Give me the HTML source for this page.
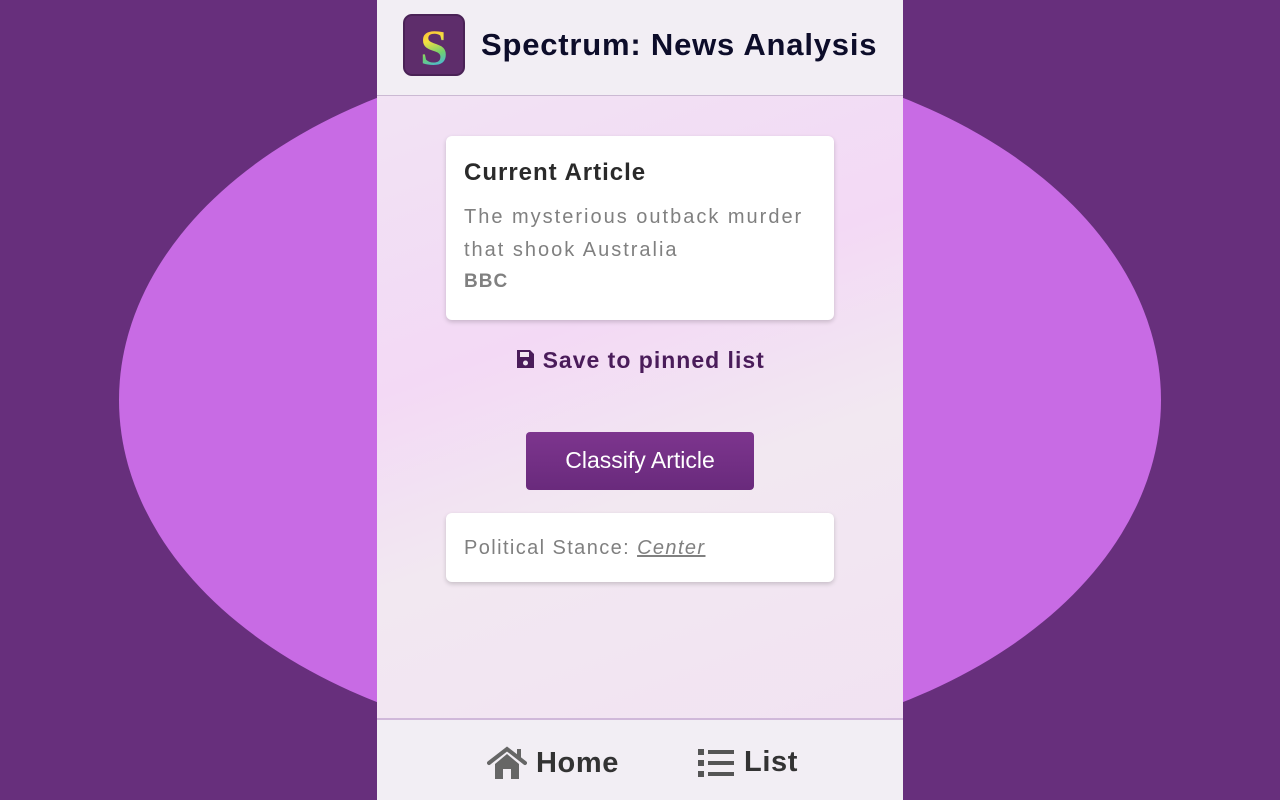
<!DOCTYPE html>
<html><head><meta charset="utf-8"><style>
*{margin:0;padding:0;box-sizing:border-box}
body{width:1280px;height:800px;background:#672f7c;position:relative;overflow:hidden;font-family:"Liberation Sans",sans-serif}
.ell{position:absolute;left:119px;top:50px;width:1042px;height:700px;border-radius:50%;background:#c86be4}
.panel{position:absolute;left:377px;top:0;width:526px;height:800px;background:linear-gradient(160deg,#f1e6f4 0%,#f3d9f5 40%,#f2e8f1 60%,#f1e1f3 100%)}
.hdr{height:96px;background:#f2eef4;border-bottom:1px solid #cbb9d3;position:relative}
.logo{position:absolute;left:26px;top:14px;width:62px;height:62px;border-radius:9px;background:#5e2d6b;border:2px solid #4a2256}
.logo span{position:absolute;left:0;right:0;top:2px;text-align:center;font:bold 50px "Liberation Serif",serif;background:linear-gradient(160deg,#ff6fa0,#ffb030,#f5e040,#70d070,#40b0f0,#b080ff);-webkit-background-clip:text;color:transparent}
.title{position:absolute;left:104px;top:27px;font-weight:bold;font-size:31px;color:#0d0d2a;letter-spacing:0.8px}
.card{position:absolute;left:69px;width:388px;background:#fff;border-radius:6px;box-shadow:0 2px 5px rgba(0,0,0,.18)}
.c1{top:136px;height:184px;padding:23px 18px}
.c1 h2{font-size:24px;color:#2a2a2a;margin-bottom:14px;letter-spacing:1px}
.c1 p{font-size:20px;color:#808080;line-height:33px;letter-spacing:2px}
.c1 b{font-size:19px;color:#808080;letter-spacing:1px;display:block;margin-top:4px}
.save{position:absolute;left:0;right:0;top:347px;text-align:center;font-weight:bold;font-size:23px;color:#4a1c5a;letter-spacing:1px}
.btn{position:absolute;left:149px;top:432px;width:228px;height:58px;border-radius:4px;background:linear-gradient(#7d358e,#692a7c);color:#fff;font-size:23px;text-align:center;line-height:57px}
.c2{top:513px;height:69px;padding:0 18px;line-height:70px;font-size:20px;color:#808080;letter-spacing:1.4px}
.c2 i{text-decoration:underline}
.ftr{position:absolute;left:0;top:718px;width:526px;height:82px;background:#f2eef4;border-top:2px solid #d0b8da}
.nav{position:absolute;top:26px;font-weight:bold;font-size:29px;color:#333;display:flex;align-items:center;gap:9px;letter-spacing:0.6px}
</style></head><body>
<div class="ell"></div>
<div class="panel">
 <div class="hdr"><div class="logo"><span>S</span></div><div class="title">Spectrum: News Analysis</div></div>
 <div class="card c1"><h2>Current Article</h2><p>The mysterious outback murder<br>that shook Australia</p><b>BBC</b></div>
 <div class="save"><svg width="20" height="22" viewBox="0 0 20 22" style="vertical-align:-2px"><path d="M2 2h13l4 4v14H2z" fill="#4a1c5a"/><rect x="5" y="4" width="9" height="5" fill="#f2e6f3"/><circle cx="10.5" cy="15" r="2.5" fill="#f2e6f3"/></svg> Save to pinned list</div>
 <div class="btn">Classify Article</div>
 <div class="card c2">Political Stance: <i>Center</i></div>
 <div class="ftr">
  <div class="nav" style="left:110px"><svg width="40" height="34" viewBox="0 0 40 34"><path d="M2 17L20 3l18 14" stroke="#666" stroke-width="4" fill="none" stroke-linecap="round"/><rect x="30" y="3" width="4" height="10" fill="#666"/><path d="M8 18l12-10 12 10v15h-8v-10h-8v10H8z" fill="#666"/></svg>Home</div>
  <div class="nav" style="left:320px"><svg width="38" height="32" viewBox="0 0 38 32"><rect x="1" y="2" width="6" height="6" fill="#555"/><rect x="1" y="13" width="6" height="6" fill="#555"/><rect x="1" y="24" width="6" height="6" fill="#555"/><rect x="11" y="3" width="26" height="4" fill="#555"/><rect x="11" y="14" width="26" height="4" fill="#555"/><rect x="11" y="25" width="26" height="4" fill="#555"/></svg>List</div>
 </div>
</div>
</body></html>
